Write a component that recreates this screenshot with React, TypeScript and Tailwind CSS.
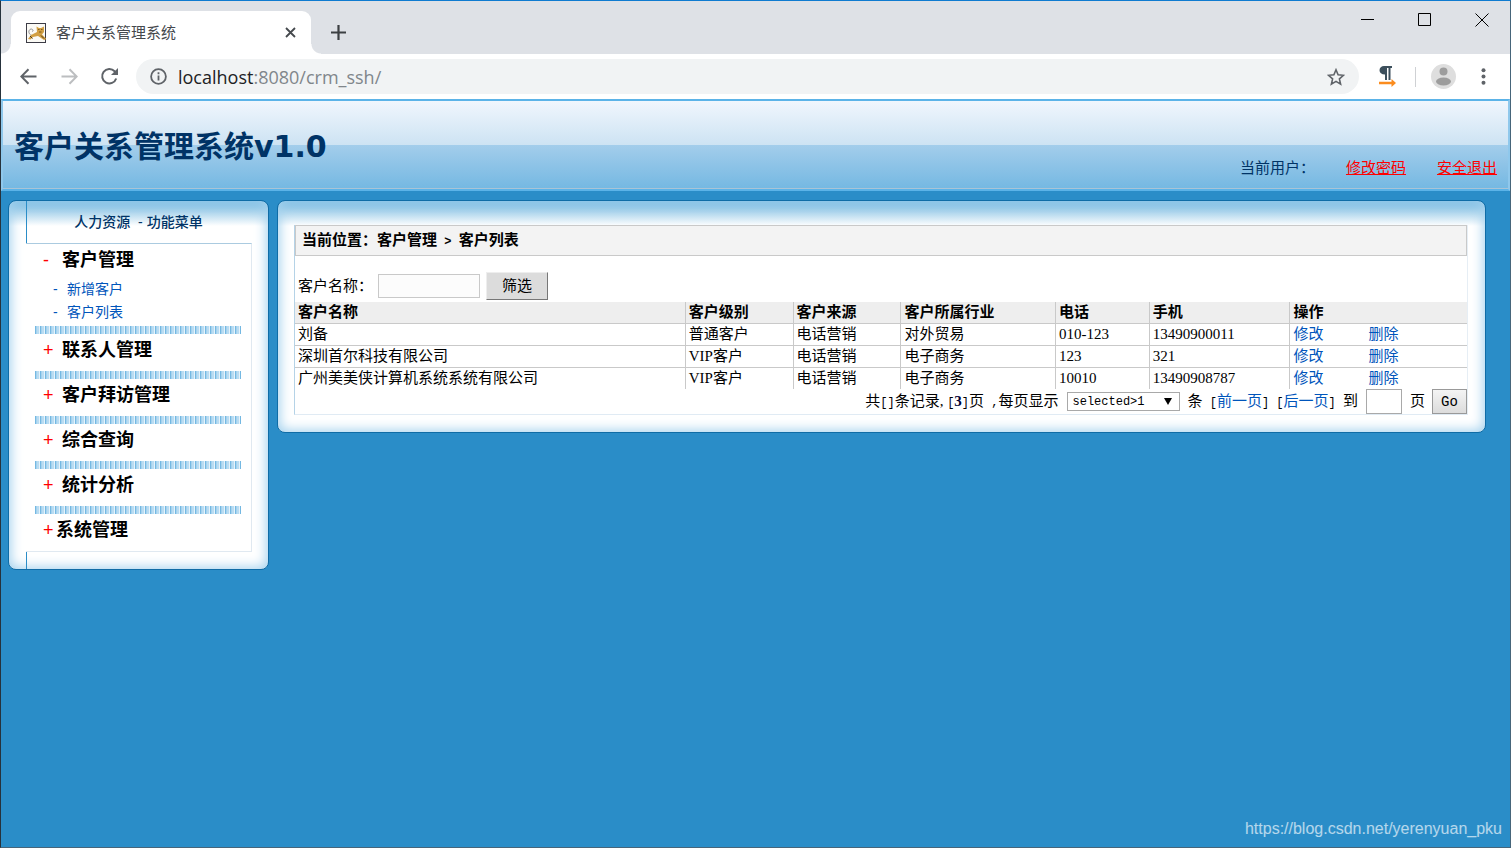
import type { FC, ReactNode } from "react";
import { useState } from "react";

interface Customer {
  name: string;
  level: string;
  source: string;
  industry: string;
  phone: string;
  mobile: string;
}

interface MenuItem {
  title: string;
  open?: boolean;
  tight?: boolean;
  children?: string[];
}

const customers: Customer[] = [
  { name: "刘备", level: "普通客户", source: "电话营销", industry: "对外贸易", phone: "010-123", mobile: "13490900011" },
  { name: "深圳首尔科技有限公司", level: "VIP客户", source: "电话营销", industry: "电子商务", phone: "123", mobile: "321" },
  { name: "广州美美侠计算机系统系统有限公司", level: "VIP客户", source: "电话营销", industry: "电子商务", phone: "10010", mobile: "13490908787" },
];

const menu: MenuItem[] = [
  { title: "客户管理", open: true, children: ["新增客户", "客户列表"] },
  { title: "联系人管理" },
  { title: "客户拜访管理" },
  { title: "综合查询" },
  { title: "统计分析" },
  { title: "系统管理", tight: true },
];

const columns = [
  { label: "客户名称", width: "w-[33.3%]" },
  { label: "客户级别", width: "w-[9.2%]" },
  { label: "客户来源", width: "w-[9.2%]" },
  { label: "客户所属行业", width: "w-[13.2%]" },
  { label: "电话", width: "w-[8%]" },
  { label: "手机", width: "w-[12%]" },
  { label: "操作", width: "" },
];

const CatIcon = () => (
  <svg width="20" height="20" viewBox="0 0 20 20" aria-hidden="true">
    <rect x="0.5" y="0.5" width="19" height="19" fill="#fbfaf5" stroke="#3c3c46" />
    <path d="M6 12.500c-4-1-4-6-1-6.500 2 0 3 2 1 2.500" fill="none" stroke="#999" />
    <path d="M2 16l3-4 6-3-.5-5.500 2.500 1.500h2l3-1.500v5.500l-2 2.500 4.500 4.500-2.500 1-6-4-5 1-2.500 2.500z" fill="#d3a043" />
    <path d="M4 13l2.500 2.500M15 12.500l3 3" stroke="#4d3a1d" />
    <path d="M12 6.500h1.500M15 6.500h1.500M13 9h2.500" stroke="#7a5c22" />
  </svg>
);

const Chrome: FC = () => (
  <header className="font-['Open_Sans','Noto_Sans_CJK_SC',sans-serif]">
    <div className="flex h-[53px] items-end justify-between bg-[#dee1e6]">
      <div className="flex items-center">
        <div className="relative ml-2.5 flex h-[43px] w-[300px] items-center rounded-t-[9px] bg-white px-[15px]">
          <CatIcon />
          <span className="ml-2.5 flex-1 text-[15px] text-[#45494d]">客户关系管理系统</span>
          <button aria-label="关闭标签页" className="text-[#45494d]">
            <svg width="11" height="11" viewBox="0 0 11 11" stroke="currentColor" strokeWidth="1.8">
              <path d="M1 1l9 9M10 1l-9 9" />
            </svg>
          </button>
          <span className="absolute -left-2.5 bottom-0 size-2.5 bg-[radial-gradient(circle_at_0_0,#dee1e6_9px,#fff_10px)]" />
          <span className="absolute -right-2.5 bottom-0 size-2.5 bg-[radial-gradient(circle_at_100%_0,#dee1e6_9px,#fff_10px)]" />
        </div>
        <button aria-label="新标签页" className="ml-5 text-[#3c4043]">
          <svg width="15" height="15" viewBox="0 0 15 15" stroke="currentColor" strokeWidth="2.2">
            <path d="M7.5 0v15M0 7.5h15" />
          </svg>
        </button>
      </div>
      <div className="flex items-center gap-[43px] self-start pt-3 pr-[21px] text-black">
        <button aria-label="最小化">
          <svg width="14" height="14" viewBox="0 0 14 14" stroke="currentColor"><path d="M0 6.5h13" /></svg>
        </button>
        <button aria-label="最大化">
          <svg width="14" height="14" viewBox="0 0 14 14" stroke="currentColor" fill="none"><path d="M.5 .5h12v12H.5z" /></svg>
        </button>
        <button aria-label="关闭">
          <svg width="14" height="14" viewBox="0 0 14 14" stroke="currentColor"><path d="M.5 .5l13 13M13.5 .5l-13 13" /></svg>
        </button>
      </div>
    </div>

    <div className="flex h-[45px] items-center bg-white pr-6 pl-[19px] text-[#5f6368]">
      <button aria-label="后退">
        <svg width="17" height="17" viewBox="0 0 17 17" fill="none" stroke="currentColor" strokeWidth="2">
          <path d="M16.500 8.500H1.500M8.500 1.300L1.300 8.500l7.200 7.200" />
        </svg>
      </button>
      <button aria-label="前进" className="ml-6 text-[#bcbec0]">
        <svg width="17" height="17" viewBox="0 0 17 17" fill="none" stroke="currentColor" strokeWidth="2">
          <path d="M.5 8.500h15M8.500 1.300l7.200 7.200-7.200 7.200" />
        </svg>
      </button>
      <button aria-label="重新加载" className="ml-[22px]">
        <svg width="19" height="19" viewBox="0 0 19 19" fill="none" stroke="currentColor" strokeWidth="2">
          <path d="M16.200 11.500a7.200 7.200 0 1 1-1.600-7.200l1.500 1.500" />
          <path d="M18 1v7h-7z" fill="currentColor" stroke="none" />
        </svg>
      </button>
      <div className="ml-[17px] flex h-[35px] flex-1 items-center rounded-full bg-[#f1f3f4] px-3.5">
        <svg width="17" height="17" viewBox="0 0 17 17" fill="none" stroke="currentColor" strokeWidth="1.8">
          <circle cx="8.5" cy="8.5" r="7.400" />
          <path d="M8.500 7.500v5M8.500 4.200v2" />
        </svg>
        <p className="ml-[11px] flex-1 text-lg text-[#80868b]">
          <span className="text-[#202124]">localhost</span>:8080/crm_ssh/
        </p>
        <button aria-label="收藏">
          <svg width="18" height="18" viewBox="0 0 18 18" fill="none" stroke="currentColor" strokeWidth="1.600">
            <path d="M9 1.800l2.100 5 5.400.5-4.100 3.600 1.200 5.300L9 13.400l-4.600 2.800 1.200-5.300L1.500 7.300l5.400-.5z" />
          </svg>
        </button>
      </div>
      <button aria-label="扩展程序" className="ml-5">
        <svg width="18" height="21" viewBox="0 0 18 21">
          <path d="M5 0h8v2h-1.500v12H9.500V2H8v12H6V8.500C2.500 8.500.5 7 .5 4.300S2.500 0 5 0z" fill="#3c4f5c" />
          <path d="M0 15.800h12.500v-2.800l4.500 4-4.500 4v-2.800H0z" fill="#fb8c1e" />
        </svg>
      </button>
      <span className="ml-[18px] h-5 w-px bg-[#cfd1d4]" />
      <button aria-label="用户" className="ml-[15px]">
        <svg width="25" height="25" viewBox="0 0 25 25">
          <circle cx="12.5" cy="12.500" r="12.500" fill="#dedede" />
          <circle cx="12.5" cy="7.500" r="4" fill="#9d9d9d" />
          <ellipse cx="12.5" cy="17.500" rx="7.500" ry="4" fill="#9d9d9d" />
        </svg>
      </button>
      <button aria-label="菜单" className="ml-[25px]">
        <svg width="5" height="17" viewBox="0 0 5 17" fill="currentColor">
          <circle cx="2.5" cy="2.200" r="2" />
          <circle cx="2.5" cy="8.500" r="2" />
          <circle cx="2.5" cy="14.800" r="2" />
        </svg>
      </button>
    </div>
  </header>
);

const Banner: FC = () => (
  <div className="flex h-[92px] items-center justify-between border-x-2 border-y-2 border-x-[#8fc8ec] border-y-[#5bb3e8] bg-[linear-gradient(#f0f6fd,#cde3f3_50%,#a3cdeb_50%,#74b8e2)] px-[11px] pt-0.5 shadow-[inset_0_-1px_#a9c4d6]">
    <h1 className="font-['DejaVu_Sans','Noto_Sans_CJK_SC',sans-serif] text-[30px] font-bold text-[#003366]">
      客户关系管理系统v1.0
    </h1>
    <div className="flex pt-11 text-[15px] text-[#003366]">
      <span className="mr-[31px]">当前用户：</span>
      <a href="#password" className="mr-[31px] text-[#ff0000] underline">修改密码</a>
      <a href="#logout" className="text-[#ff0000] underline">安全退出</a>
    </div>
  </div>
);

const Panel: FC<{ className: string; children: ReactNode }> = ({ className, children }) => (
  <section
    className={`${className} rounded-lg border border-[#0f6ca6] bg-[linear-gradient(#6db4de,#fff_25px)] shadow-[inset_0_0_12px_2px_#a5d2ee]`}
  >
    {children}
  </section>
);

const Sidebar: FC = () => (
  <Panel className="w-[261px] shrink-0 pr-4 pl-[17px]">
    <h2 className="h-[42px] border-l border-[#2a8dc8] pt-[11px] pr-0.5 text-center text-sm leading-5 font-medium text-[#003366]">
      人力资源&nbsp; - 功能菜单
    </h2>
    <nav className="border-t border-r border-b border-t-[#abcbe0] border-r-[#e0e9f1] border-b-[#e0e9f1] bg-white pr-2.5 pl-[9px]">
      {menu.map((item, i) => (
        <div key={item.title}>
          {i > 0 && (
            <div className="h-2 bg-[repeating-linear-gradient(90deg,#74b8e2_0_1px,#a5d2ee_1px_2px,#b9dcf2_2px_4px,#e6f3fb_4px_5px)]" />
          )}
          <div className={item.children ? "" : "pb-[5px]"}>
            <button className="flex h-8 items-center pl-2 text-lg font-bold text-black">
              <span className={`${item.tight ? "w-[13px]" : "w-[19px]"} text-left font-normal text-[#ff0000]`}>
                {item.open ? "-" : "+"}
              </span>
              {item.title}
            </button>
          </div>
          {item.children && (
            <ul className="py-0.5 pl-[18px] text-sm leading-[23px] text-[#0055bb]">
              {item.children.map((child) => (
                <li key={child}>
                  <a href="#customer" className="flex">
                    <span className="w-3.5">-</span>
                    {child}
                  </a>
                </li>
              ))}
            </ul>
          )}
        </div>
      ))}
    </nav>
    <div className="h-[17px] border-l border-[#2a8dc8]" />
  </Panel>
);

// latin characters take half of a chinese character's width
const Half: FC<{ children: ReactNode }> = ({ children }) => (
  <span className="font-['Liberation_Mono',monospace] text-xs">{children}</span>
);

const Pager: FC = () => {
  const [page, setPage] = useState("");

  return (
    <div className="flex h-[25px] items-center justify-end whitespace-pre">
      <span>
        共<Half>[]</Half>条记录, <Half>[</Half><b className="text-[#000033]">3</b><Half>]</Half>页<Half> ,</Half>每页显示
      </span>
      <span className="relative mx-2 flex">
        <select
          aria-label="每页显示"
          className="h-[19px] w-[113px] appearance-none border border-[#a9a9a9] bg-white pl-[5px] font-['Liberation_Mono',monospace] text-xs"
        >
          <option>selected&gt;1</option>
        </select>
        <svg className="pointer-events-none absolute top-1.5 right-2" width="8" height="7" viewBox="0 0 8 7">
          <path d="M0 0h8L4 7z" />
        </svg>
      </span>
      <span>
        条<Half> [</Half><a href="#prev" className="text-[#0055bb]">前一页</a><Half>] [</Half>
        <a href="#next" className="text-[#0055bb]">后一页</a><Half>] </Half>到
      </span>
      <input
        aria-label="页码"
        value={page}
        onChange={(e) => setPage(e.target.value)}
        className="mx-2 h-[25px] w-9 border border-[#a9a9a9] bg-white px-1"
      />
      <span>页</span>
      <button className="ml-[7px] h-[25px] w-[35px] border border-[#999] bg-linear-to-b from-[#f4f4f4] to-[#dcdcdc] font-['Liberation_Mono',monospace] text-sm">
        Go
      </button>
    </div>
  );
};

const CustomerList: FC = () => {
  const [keyword, setKeyword] = useState("");

  return (
    <Panel className="min-w-0 flex-1 px-4 pt-6 pb-[17px]">
      <div className="mr-px border border-t-0 border-r-[#e6eef5] border-b-[#e0ebf4] border-l-[#b5d3e7] bg-white font-['Liberation_Serif','Noto_Sans_CJK_SC',sans-serif] text-[15px] text-black">
        <h2 className="h-[31px] border border-[#c9c9c9] bg-[#f3f3f3] pl-1.5 leading-[29px] font-bold whitespace-pre">
          当前位置：客户管理<Half>{" > "}</Half>客户列表
        </h2>
        <form className="flex items-center pt-4 pb-0.5 pl-[3px]" onSubmit={(e) => e.preventDefault()}>
          <label htmlFor="keyword">客户名称：</label>
          <input
            id="keyword"
            value={keyword}
            onChange={(e) => setKeyword(e.target.value)}
            className="ml-[5px] h-6 w-[102px] border border-[#c9c9c9] bg-[#fcfcfc] px-1"
          />
          <button className="ml-1.5 h-7 w-[62px] border border-t-[#eee] border-r-[#777] border-b-[#777] border-l-[#eee] bg-[#dcdcdc]">
            筛选
          </button>
        </form>
        <table className="w-full table-fixed border-collapse text-left leading-[21px]">
          <thead>
            <tr className="bg-[#eee]">
              {columns.map((col) => (
                <th key={col.label} className={`${col.width} border-r border-b border-[#c9c9c9] px-[3px] py-0 last:border-r-0`}>
                  {col.label}
                </th>
              ))}
            </tr>
          </thead>
          <tbody>
            {customers.map((c) => (
              <tr key={c.name} className="border-b border-[#c9c9c9] last:border-b-0">
                {[c.name, c.level, c.source, c.industry, c.phone, c.mobile].map((text, i) => (
                  <td key={i} className="border-r border-[#c9c9c9] px-[3px] py-0">{text}</td>
                ))}
                <td className="px-[3px] py-0 text-[#0055bb]">
                  <a href="#edit" className="mr-[45px]">修改</a>
                  <a href="#delete">删除</a>
                </td>
              </tr>
            ))}
          </tbody>
        </table>
        <Pager />
      </div>
    </Panel>
  );
};

export default function App() {
  return (
    <div className="relative min-h-screen border border-t-[#0f7bd0] border-r-[#46657a] border-b-[#46657a] border-l-[#26323c] bg-[#2a8dc8] font-['Liberation_Sans','Noto_Sans_CJK_SC',sans-serif]">
      <Chrome />
      <Banner />
      <main className="flex items-start gap-2 pt-[9px] pr-6 pl-[7px]">
        <Sidebar />
        <CustomerList />
      </main>
      <p className="absolute right-2 bottom-1.5 text-base text-white/65">
        https://blog.csdn.net/yerenyuan_pku
      </p>
    </div>
  );
}
